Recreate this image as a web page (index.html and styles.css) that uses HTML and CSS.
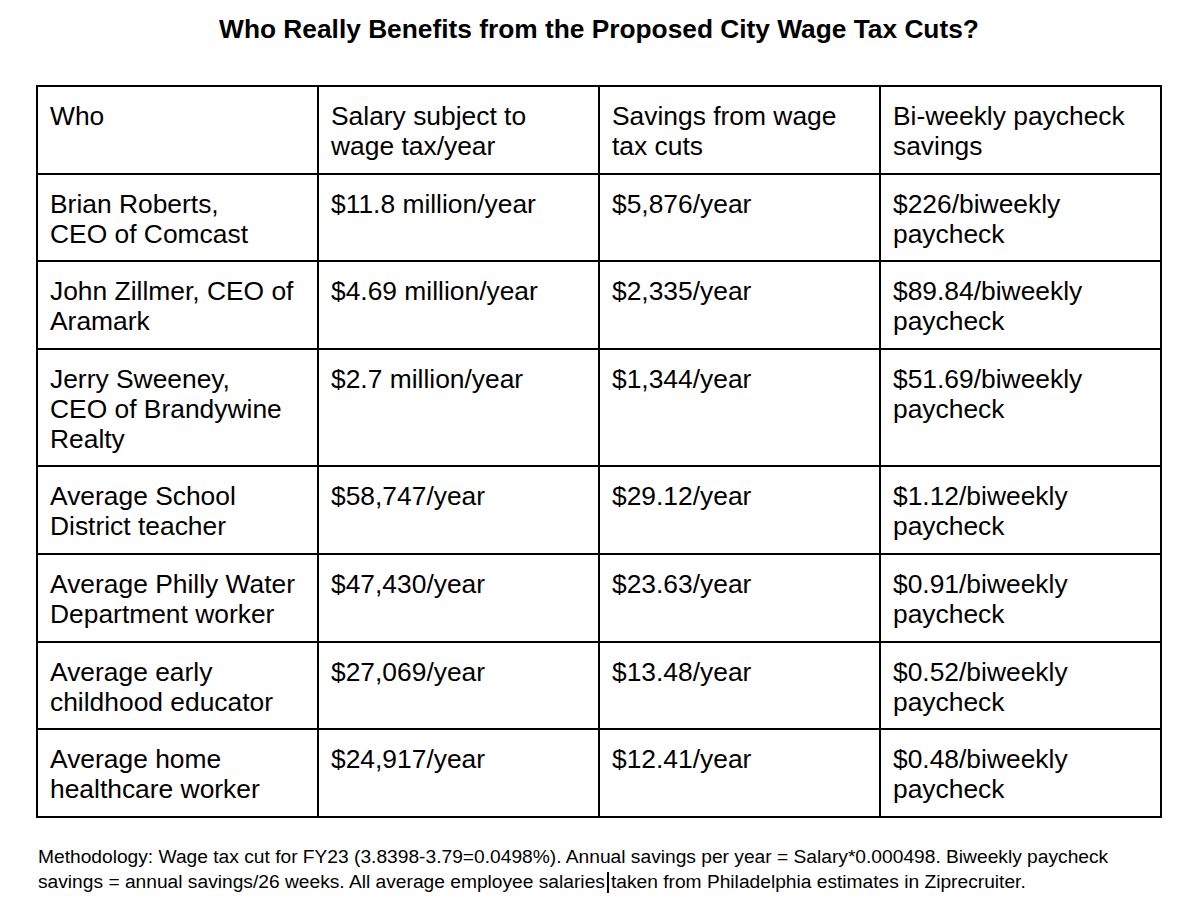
FILE: index.html
```html
<!DOCTYPE html>
<html lang="en">
<head>
<meta charset="utf-8">
<title>Who Really Benefits from the Proposed City Wage Tax Cuts?</title>
<link rel="stylesheet" href="styles.css">
</head>
<body>
<div class="page">
  <h1 class="title">Who Really Benefits from the Proposed City Wage Tax Cuts?</h1>
  <table class="wage-table">
    <colgroup>
      <col class="col"><col class="col"><col class="col"><col class="col">
    </colgroup>
    <tr>
      <td>Who</td>
      <td>Salary subject to<br>wage tax/year</td>
      <td>Savings from wage<br>tax cuts</td>
      <td>Bi-weekly paycheck<br>savings</td>
    </tr>
    <tr>
      <td>Brian Roberts,<br>CEO of Comcast</td>
      <td>$11.8 million/year</td>
      <td>$5,876/year</td>
      <td>$226/biweekly<br>paycheck</td>
    </tr>
    <tr>
      <td>John Zillmer, CEO of<br>Aramark</td>
      <td>$4.69 million/year</td>
      <td>$2,335/year</td>
      <td>$89.84/biweekly<br>paycheck</td>
    </tr>
    <tr>
      <td>Jerry Sweeney,<br>CEO of Brandywine<br>Realty</td>
      <td>$2.7 million/year</td>
      <td>$1,344/year</td>
      <td>$51.69/biweekly<br>paycheck</td>
    </tr>
    <tr>
      <td>Average School<br>District teacher</td>
      <td>$58,747/year</td>
      <td>$29.12/year</td>
      <td>$1.12/biweekly<br>paycheck</td>
    </tr>
    <tr>
      <td>Average Philly Water<br>Department worker</td>
      <td>$47,430/year</td>
      <td>$23.63/year</td>
      <td>$0.91/biweekly<br>paycheck</td>
    </tr>
    <tr>
      <td>Average early<br>childhood educator</td>
      <td>$27,069/year</td>
      <td>$13.48/year</td>
      <td>$0.52/biweekly<br>paycheck</td>
    </tr>
    <tr>
      <td>Average home<br>healthcare worker</td>
      <td>$24,917/year</td>
      <td>$12.41/year</td>
      <td>$0.48/biweekly<br>paycheck</td>
    </tr>
  </table>
  <p class="note">Methodology: Wage tax cut for FY23 (3.8398-3.79=0.0498%). Annual savings per year = Salary*0.000498. Biweekly paycheck<br>savings = annual savings/26 weeks. All average employee salaries<span class="caret"></span>taken from Philadelphia estimates in Ziprecruiter.</p>
</div>
</body>
</html>
```
FILE: styles.css
```css
html, body {
  margin: 0;
  padding: 0;
  background: #ffffff;
}

body {
  font-family: "Liberation Sans", Arial, sans-serif;
  color: #000000;
}

.page {
  width: 1126px;
  margin-left: 36px;
  padding-top: 14px;
}

.title {
  margin: 0;
  font-size: 26.3px;
  line-height: 30px;
  font-weight: bold;
  text-align: center;
}

.wage-table {
  margin-top: 41px;
  width: 1126px;
  table-layout: fixed;
  border-collapse: separate;
  border-spacing: 0;
  border-top: 2px solid #000;
  border-left: 2px solid #000;
}

.col {
  width: 25%;
}

.wage-table td {
  vertical-align: top;
  padding: 14px 12px 11.6px 12px;
  border-right: 2px solid #000;
  border-bottom: 2px solid #000;
  font-size: 26.4px;
  line-height: 30px;
}

.note {
  margin: 26px 0 0 2px;
  font-size: 19.2px;
  line-height: 25px;
  white-space: nowrap;
}

.caret {
  display: inline-block;
  width: 2px;
  height: 21px;
  margin: 0 2px 0 2px;
  background: #000;
  vertical-align: -5px;
}
```
